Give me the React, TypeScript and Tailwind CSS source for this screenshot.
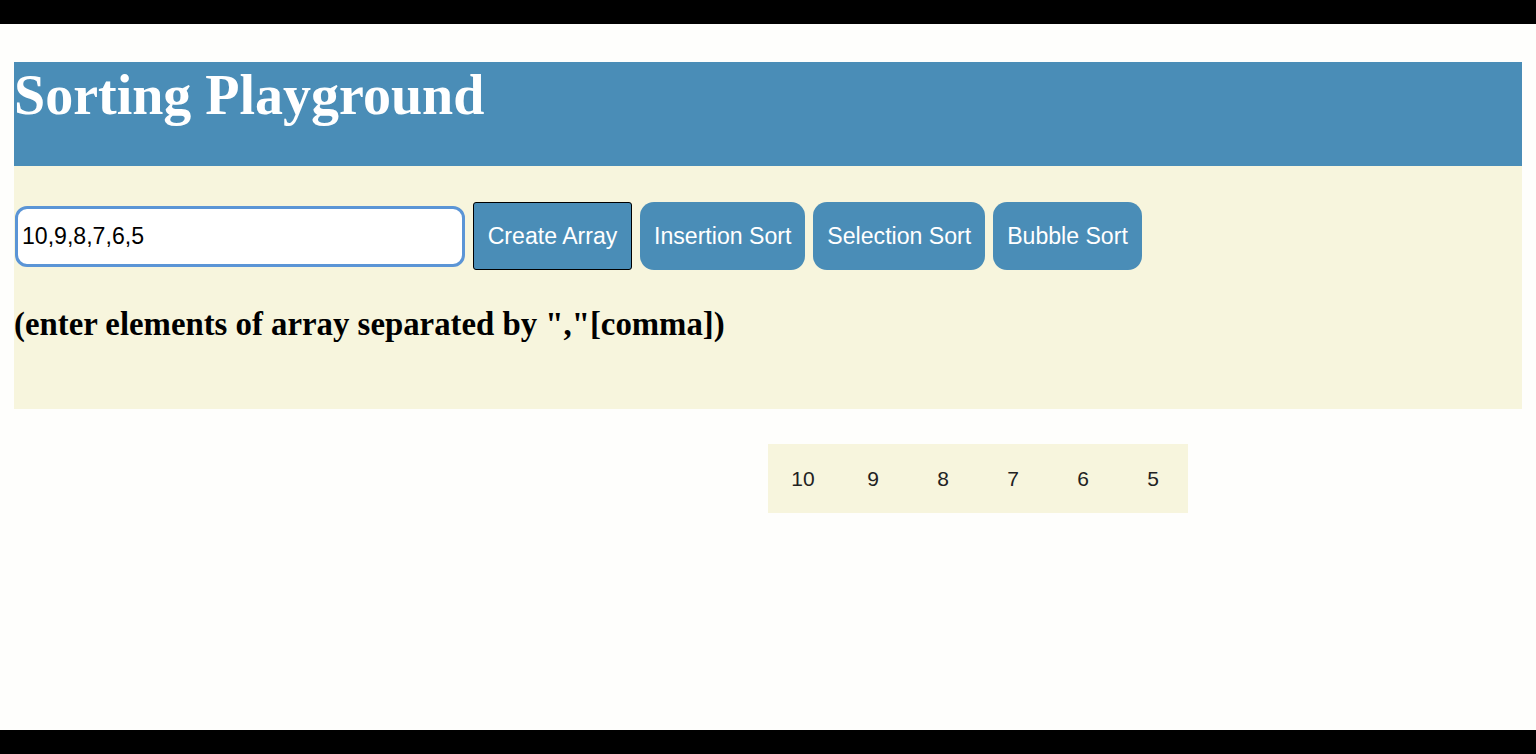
const nums = [10, 9, 8, 7, 6, 5];
const sorts = ['Insertion Sort', 'Selection Sort', 'Bubble Sort'];

export default function App() {
  return (
    <div className="flex h-[754px] w-[1536px] flex-col bg-black">
      <div className="h-[24px]" />
      <main className="flex-1 bg-[#fefefc] pt-[38px]">
        <header className="mx-[14px] h-[104px] bg-[#4a8db7]">
          <h1 className="font-['Liberation_Serif',serif] text-[56px] font-bold leading-[66px] text-white">
            Sorting Playground
          </h1>
        </header>
        <section className="mx-[14px] h-[243px] bg-[#f7f5dd] pt-[36px]">
          <div className="flex items-center gap-[8px] font-['Liberation_Sans',Arial,sans-serif] text-[23.1px]">
            <input
              defaultValue="10,9,8,7,6,5"
              className="ml-px h-[61px] w-[450px] rounded-[12px] border-[3px] border-[#5b95d6] bg-white px-[4px] text-black outline-none"
            />
            <button className="h-[68px] w-[159px] rounded-[3px] border border-black bg-[#4a8db7] text-white">
              Create Array
            </button>
            {sorts.map((s) => (
              <button key={s} className="h-[68px] rounded-[14px] bg-[#4a8db7] px-[14px] text-white">
                {s}
              </button>
            ))}
          </div>
          <p className="mt-[34px] font-['Liberation_Serif',serif] text-[32.8px] font-bold leading-[40px] text-black">
            (enter elements of array separated by ","[comma])
          </p>
        </section>
        <div className="ml-[50%] mt-[35px] flex h-[69px] w-[420px] items-center bg-[#f7f5dd] font-['Liberation_Sans',Arial,sans-serif] text-[21px] text-[#222]">
          {nums.map((n) => (
            <span key={n} className="w-[70px] text-center">
              {n}
            </span>
          ))}
        </div>
      </main>
      <div className="h-[24px]" />
    </div>
  );
}
